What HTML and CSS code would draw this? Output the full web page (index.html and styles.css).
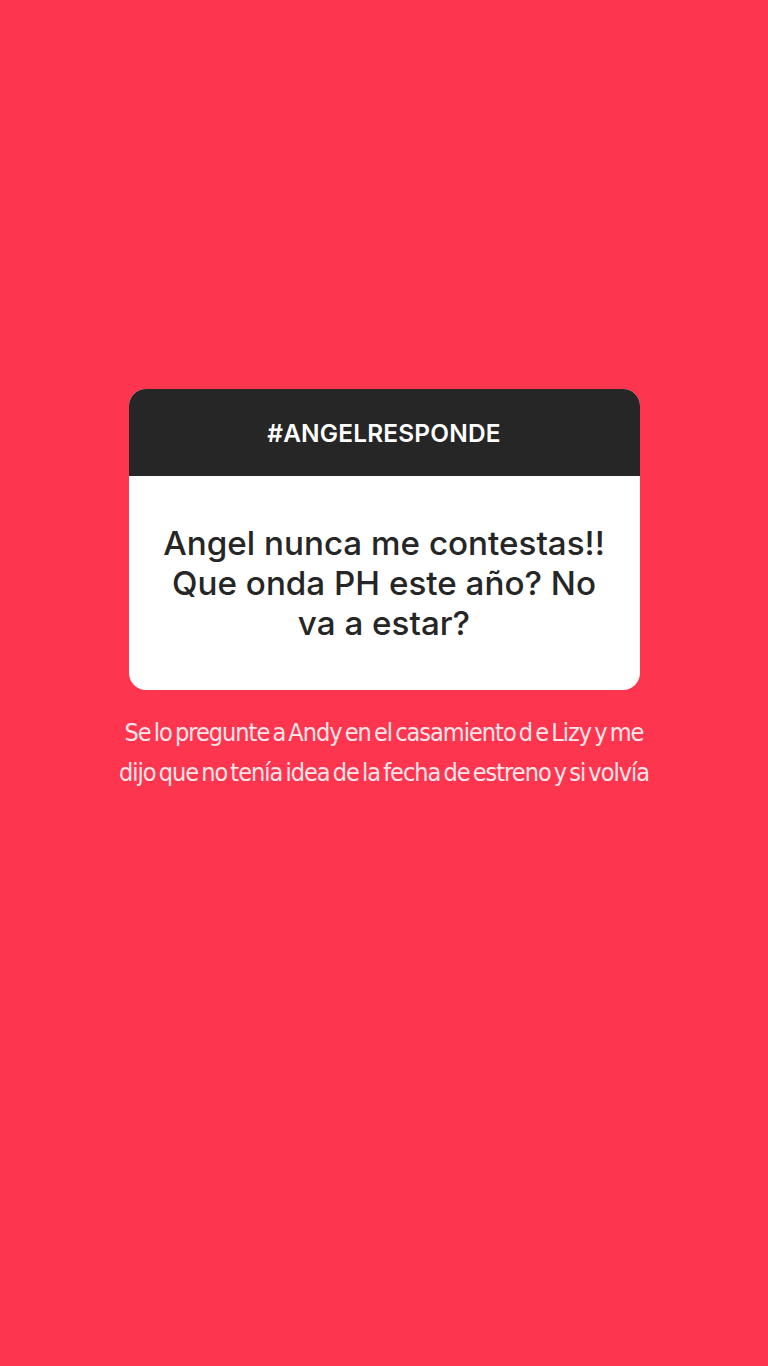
FILE: index.html
```html
<!DOCTYPE html>
<html lang="es">
<head>
<meta charset="utf-8">
<title>#ANGELRESPONDE</title>
<link rel="stylesheet" href="styles.css">
</head>
<body>
<main class="story">
  <section class="card">
    <header class="card-head">#ANGELRESPONDE</header>
    <div class="card-body">
      <p class="question">Angel nunca me contestas!!<br>Que onda PH este año? No<br>va a estar?</p>
    </div>
  </section>
  <p class="caption">Se lo pregunte a Andy en el casamiento d e Lizy y me<br>dijo que no tenía idea de la fecha de estreno y si volvía</p>
</main>
</body>
</html>
```
FILE: styles.css
```css
html, body {
  margin: 0;
  padding: 0;
}
body {
  background: #fe354f;
  width: 768px;
  height: 1366px;
  overflow: hidden;
  font-family: "Inter", "Roboto", "Liberation Sans", sans-serif;
}
.story {
  display: flex;
  flex-direction: column;
  align-items: center;
  padding-top: 389px;
}
.card {
  width: 511px;
  border-radius: 17px;
  overflow: hidden;
  background: #ffffff;
}
.card-head {
  background: #262626;
  color: #ffffff;
  height: 87px;
  display: flex;
  align-items: center;
  justify-content: center;
  font-size: 24.4px;
  font-weight: 600;
  letter-spacing: 0.2px;
}
.card-body {
  height: 214px;
  display: flex;
  align-items: center;
  justify-content: center;
}
.question {
  margin: 0;
  text-align: center;
  color: #262626;
  font-size: 33.2px;
  line-height: 40px;
  font-weight: 500;
}
.caption {
  margin: 23px 0 0;
  text-align: center;
  color: #fde6ea;
  font-family: "DejaVu Sans Condensed", "Liberation Sans Narrow", sans-serif;
  font-stretch: condensed;
  font-size: 25px;
  line-height: 40px;
  font-weight: 400;
  letter-spacing: -1px;
  word-spacing: -3px;
}
```
